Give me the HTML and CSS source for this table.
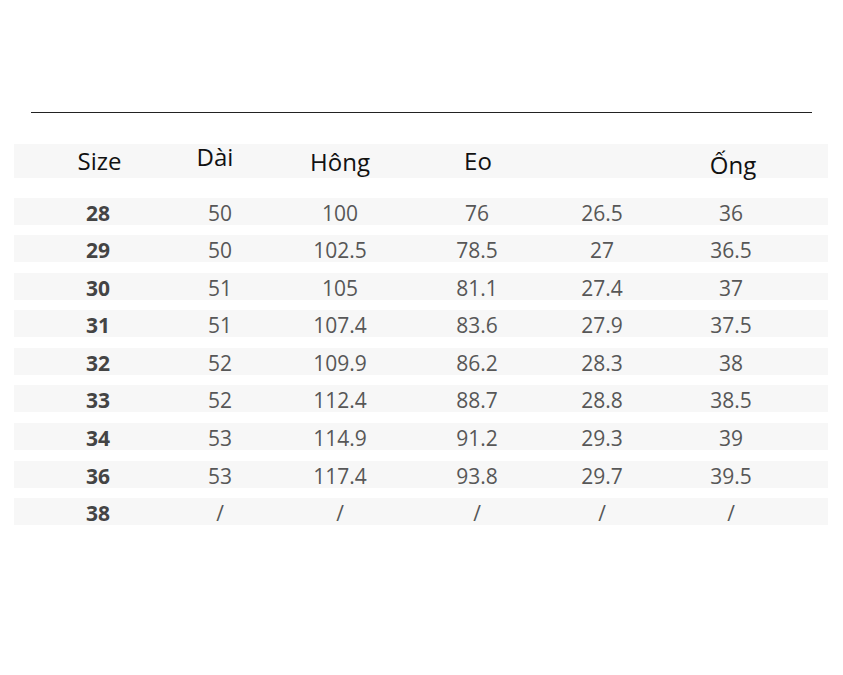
FILE: index.html
```html
<!DOCTYPE html>
<html lang="vi">
<head>
<meta charset="utf-8">
<title>Bảng size</title>
<link rel="stylesheet" href="styles.css">
</head>
<body>
<div class="page">
  <div class="rule"></div>
  <div class="table">
    <div class="row head">
      <div class="cell h-size">Size</div>
      <div class="cell h-dai">Dài</div>
      <div class="cell h-hong">Hông</div>
      <div class="cell h-eo">Eo</div>
      <div class="cell"></div>
      <div class="cell h-ong">Ống</div>
      <div class="cell"></div>
    </div>
    <div class="rows">
      <div class="row data"><div class="cell size">28</div><div class="cell">50</div><div class="cell">100</div><div class="cell">76</div><div class="cell">26.5</div><div class="cell">36</div><div class="cell"></div></div>
      <div class="row data"><div class="cell size">29</div><div class="cell">50</div><div class="cell">102.5</div><div class="cell">78.5</div><div class="cell">27</div><div class="cell">36.5</div><div class="cell"></div></div>
      <div class="row data"><div class="cell size">30</div><div class="cell">51</div><div class="cell">105</div><div class="cell">81.1</div><div class="cell">27.4</div><div class="cell">37</div><div class="cell"></div></div>
      <div class="row data"><div class="cell size">31</div><div class="cell">51</div><div class="cell">107.4</div><div class="cell">83.6</div><div class="cell">27.9</div><div class="cell">37.5</div><div class="cell"></div></div>
      <div class="row data"><div class="cell size">32</div><div class="cell">52</div><div class="cell">109.9</div><div class="cell">86.2</div><div class="cell">28.3</div><div class="cell">38</div><div class="cell"></div></div>
      <div class="row data"><div class="cell size">33</div><div class="cell">52</div><div class="cell">112.4</div><div class="cell">88.7</div><div class="cell">28.8</div><div class="cell">38.5</div><div class="cell"></div></div>
      <div class="row data"><div class="cell size">34</div><div class="cell">53</div><div class="cell">114.9</div><div class="cell">91.2</div><div class="cell">29.3</div><div class="cell">39</div><div class="cell"></div></div>
      <div class="row data"><div class="cell size">36</div><div class="cell">53</div><div class="cell">117.4</div><div class="cell">93.8</div><div class="cell">29.7</div><div class="cell">39.5</div><div class="cell"></div></div>
      <div class="row data"><div class="cell size">38</div><div class="cell">/</div><div class="cell">/</div><div class="cell">/</div><div class="cell">/</div><div class="cell">/</div><div class="cell"></div></div>
    </div>
  </div>
</div>
</body>
</html>
```
FILE: styles.css
```css
html, body {
  margin: 0;
  padding: 0;
  background: #ffffff;
}
body {
  font-family: "Open Sans", "Noto Sans", sans-serif;
}
.page {
  width: 843px;
  height: 675px;
  padding-top: 112px;
  box-sizing: border-box;
}
.rule {
  margin-left: 31px;
  width: 781px;
  height: 0;
  border-top: 1.5px solid #222222;
}
.table {
  margin-top: 30.5px;
  margin-left: 14px;
  width: 814px;
}
.row {
  display: grid;
  grid-template-columns: 168px 76px 164px 110px 140px 118px 1fr;
  background: #f7f7f7;
}
.cell {
  text-align: center;
  white-space: nowrap;
}
.head {
  height: 34px;
  line-height: 34px;
  font-size: 24px;
  color: #111111;
}
.h-size {
  padding-left: 3px;
}
.h-dai {
  padding-right: 10px;
  line-height: 26px;
}
.h-hong {
  line-height: 35px;
}
.h-eo {
  line-height: 33px;
  padding-left: 2px;
}
.h-ong {
  line-height: 42px;
  padding-left: 4px;
}
.rows {
  margin-top: 20px;
  display: flex;
  flex-direction: column;
  gap: 10.6px;
}
.data {
  height: 27px;
  line-height: 27px;
  font-size: 21px;
  color: #575757;
}
.data .cell {
  padding-top: 2px;
}
.data .size {
  font-weight: 700;
  color: #444444;
  font-size: 21px;
}
```
